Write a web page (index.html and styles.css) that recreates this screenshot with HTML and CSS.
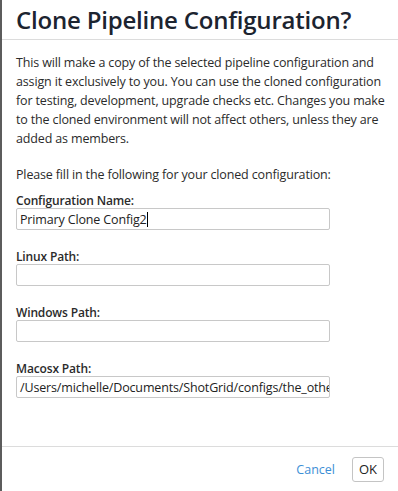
FILE: index.html
```html
<!DOCTYPE html>
<html>
<head>
<meta charset="utf-8">
<link rel="stylesheet" href="styles.css">
</head>
<body>
<div class="dialog">
  <div class="header">
    <h1 class="title">Clone Pipeline Configuration?</h1>
  </div>
  <div class="content">
    <p class="intro">This will make a copy of the selected pipeline configuration and assign it exclusively to you. You can use the cloned configuration for testing, development, upgrade checks etc. Changes you make to the cloned environment will not affect others, unless they are added as members.</p>
    <p class="intro last">Please fill in the following for your cloned configuration:</p>
    <div class="fields">
      <label class="field">
        <span class="label">Configuration Name:</span>
        <span class="input"><span class="value">Primary Clone Config2</span><span class="caret"></span></span>
      </label>
      <label class="field">
        <span class="label">Linux Path:</span>
        <span class="input"></span>
      </label>
      <label class="field">
        <span class="label">Windows Path:</span>
        <span class="input"></span>
      </label>
      <label class="field">
        <span class="label">Macosx Path:</span>
        <span class="input"><span class="value">/Users/michelle/Documents/ShotGrid/configs/the_other_config</span></span>
      </label>
    </div>
  </div>
  <div class="footer">
    <span class="cancel">Cancel</span>
    <span class="ok">OK</span>
  </div>
</div>
</body>
</html>
```

FILE: styles.css
```css
html, body {
  margin: 0;
  padding: 0;
  background: #fff;
}
body {
  font-family: "Open Sans", "Noto Sans", sans-serif;
  color: #2b2b2b;
}
.dialog {
  height: 491px;
  box-sizing: border-box;
  border-left: 2px solid #5c5c5c;
  display: flex;
  flex-direction: column;
}
.header {
  height: 40px;
  box-sizing: border-box;
  border-bottom: 1px solid #dcdcdc;
  padding-left: 14px;
  display: flex;
  align-items: center;
}
.title {
  margin: 0;
  font-size: 24px;
  font-weight: 600;
  color: #1c2430;
  letter-spacing: -0.2px;
}
.content {
  flex: 1;
  padding: 13px 6px 0 14px;
}
.intro {
  margin: 0 0 17px 0;
  font-size: 12.5px;
  line-height: 19px;
  color: #2b2b2b;
  letter-spacing: -0.15px;
}
.intro.last {
  margin-bottom: 10px;
}
.fields {
  display: flex;
  flex-direction: column;
  gap: 20px;
}
.field {
  display: flex;
  flex-direction: column;
  gap: 1px;
}
.label {
  font-size: 12px;
  font-weight: 600;
  color: #2b2b2b;
  line-height: 13px;
  letter-spacing: -0.15px;
}
.input {
  width: 314px;
  height: 22px;
  box-sizing: border-box;
  border: 1px solid #c8c8c8;
  border-radius: 2px;
  display: flex;
  align-items: center;
  padding-left: 3px;
  overflow: hidden;
  white-space: nowrap;
  font-size: 12.5px;
  color: #222;
  letter-spacing: -0.15px;
}
.caret {
  display: inline-block;
  width: 1px;
  height: 15px;
  background: #000;
}
.footer {
  height: 45px;
  box-sizing: border-box;
  border-top: 1px solid #dcdcdc;
  display: flex;
  justify-content: flex-end;
  align-items: center;
  gap: 17px;
  padding-right: 14px;
}
.cancel {
  font-size: 12.5px;
  color: #3d8fd6;
}
.ok {
  font-size: 13px;
  color: #222;
  border: 1px solid #c4c4c4;
  border-radius: 3px;
  width: 32px;
  height: 25px;
  box-sizing: border-box;
  display: flex;
  align-items: center;
  justify-content: center;
}
```
